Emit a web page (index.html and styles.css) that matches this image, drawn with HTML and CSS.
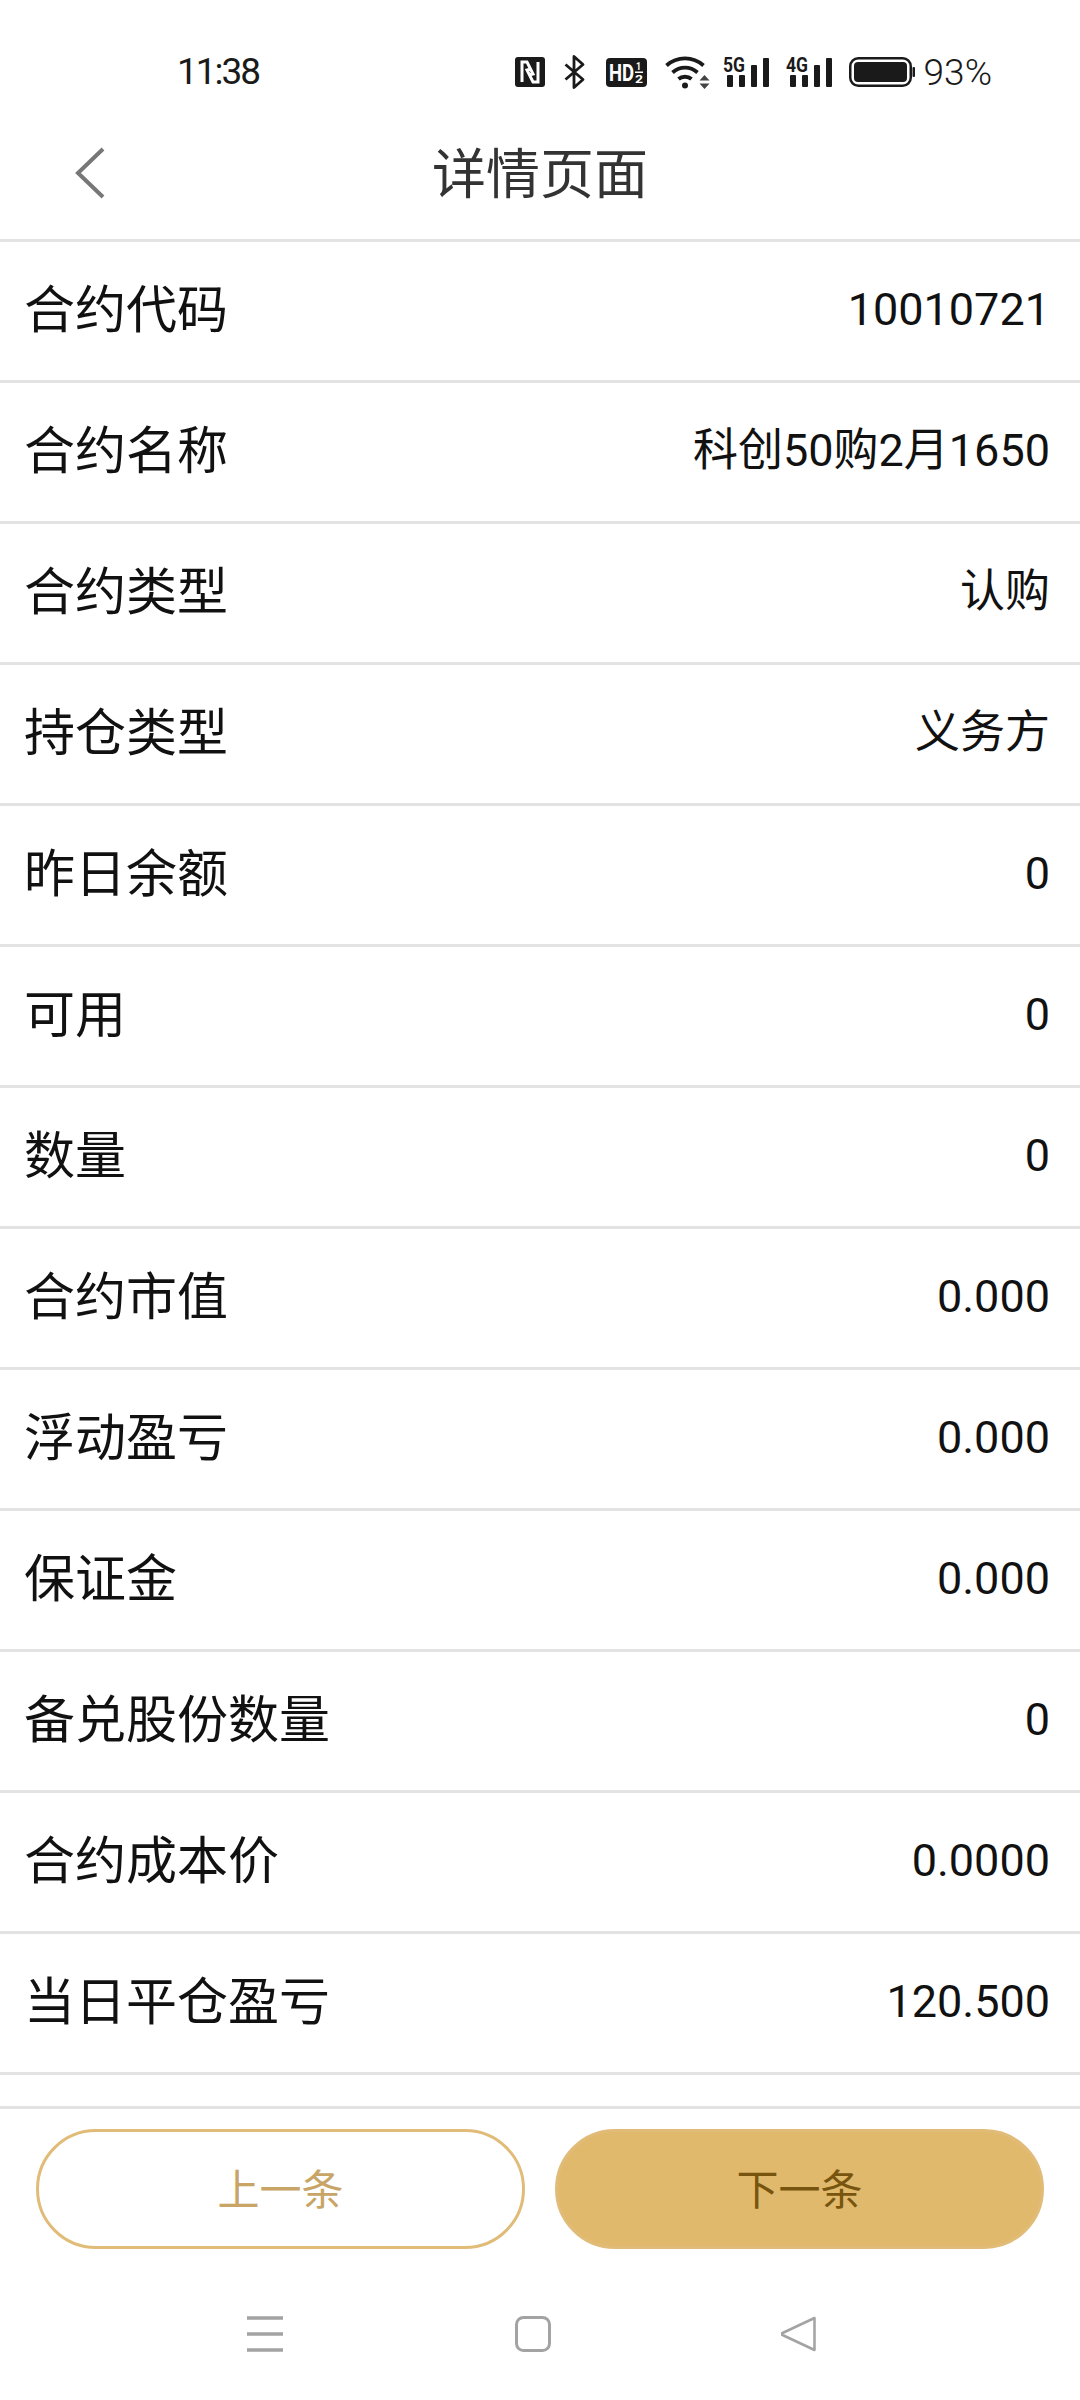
FILE: index.html
```html
<!DOCTYPE html>
<html lang="zh-CN">
<head>
<meta charset="UTF-8">
<meta name="viewport" content="width=device-width, initial-scale=1.0">
<title>详情页面</title>
<link rel="stylesheet" href="styles.css">
</head>
<body>

<div class="page">
    <div class="status-bar">
        <span class="time">11:38</span>
        <div class="status-icons">
            <!-- NFC -->
            <svg class="icon-nfc" width="30" height="30" viewBox="0 0 30 30">
                <rect width="30" height="30" rx="3" fill="#1a1a1a"/>
                <path d="M7 25V5h5l6 12-4 1M23 5v20h-5l-6-12 4-1" fill="none" stroke="#fff" stroke-width="3"/>
            </svg>
            <!-- Bluetooth -->
            <svg class="icon-bt" width="21" height="34" viewBox="0 0 21 34">
                <path d="M1.500 9.500 19 24.500 10 32.500V1.500l9 8L1.500 24.500" fill="none" stroke="#1a1a1a" stroke-width="2.800" stroke-linejoin="round"/>
            </svg>
            <!-- HD -->
            <svg class="icon-hd" width="41" height="29" viewBox="0 0 41 29">
                <rect width="41" height="29" rx="4" fill="#1a1a1a"/>
                <text x="3.800" y="23" class="hd-text" transform="scale(.77 1)">HD</text>
                <text x="30" y="12" class="hd-small" textLength="5" lengthAdjust="spacingAndGlyphs">1</text>
                <rect x="29" y="13.500" width="8" height="1.500" fill="#fff"/>
                <text x="29" y="25" class="hd-small" textLength="8" lengthAdjust="spacingAndGlyphs">2</text>
            </svg>
            <!-- Wifi -->
            <svg class="icon-wifi" width="45" height="33" viewBox="0 0 45 33">
                <path d="M1.500 9.500C12 0 28 0 38.500 9.500M7.500 16.500C15 10 25 10 32.500 16.500M13.500 23C17 20 23 20 26.500 23" fill="none" stroke="#1a1a1a" stroke-width="3.800"/>
                <circle cx="20" cy="29.500" r="3" fill="#1a1a1a"/>
                <path d="M34.500 24.500h10l-5-5.500zM34.500 27.500h10l-5 5.500z" fill="#444"/>
            </svg>
            <!-- 5G -->
            <svg class="icon-signal" width="46" height="32" viewBox="0 0 46 32">
                <text x="0" y="16" class="net-text" textLength="22" lengthAdjust="spacingAndGlyphs">5G</text>
                <rect x="4" y="19" width="6" height="12" rx="1" fill="#1a1a1a"/>
                <rect x="16" y="19" width="6" height="12" rx="1" fill="#1a1a1a"/>
                <rect x="28" y="9" width="6" height="22" rx="1" fill="#1a1a1a"/>
                <rect x="40" y="2" width="6" height="29" rx="1" fill="#1a1a1a"/>
            </svg>
            <!-- 4G -->
            <svg class="icon-signal" width="46" height="32" viewBox="0 0 46 32">
                <text x="0" y="16" class="net-text" textLength="22" lengthAdjust="spacingAndGlyphs">4G</text>
                <rect x="4" y="19" width="6" height="12" rx="1" fill="#1a1a1a"/>
                <rect x="16" y="19" width="6" height="12" rx="1" fill="#1a1a1a"/>
                <rect x="28" y="9" width="6" height="22" rx="1" fill="#1a1a1a"/>
                <rect x="40" y="2" width="6" height="29" rx="1" fill="#1a1a1a"/>
            </svg>
            <!-- Battery -->
            <svg class="icon-battery" width="66" height="30" viewBox="0 0 66 30">
                <rect x="1.250" y="1.250" width="60.500" height="27.500" rx="8" fill="none" stroke="#1a1a1a" stroke-width="2.500"/>
                <rect x="5" y="5" width="53" height="20" rx="4" fill="#1a1a1a"/>
                <rect x="63.500" y="10" width="2.500" height="10" rx="1" fill="#1a1a1a"/>
            </svg>
            <span class="battery-text">93%</span>
        </div>
    </div>

    <div class="title-bar">
        <svg class="back" width="30" height="52" viewBox="0 0 30 52">
            <path d="M28 2 3 26l25 24" fill="none" stroke="#777" stroke-width="4"/>
        </svg>
        <h1>详情页面</h1>
    </div>

    <div class="detail-list">
        <div class="row"><span class="label">合约代码</span><span class="value">10010721</span></div>
        <div class="row"><span class="label">合约名称</span><span class="value">科创50购2月1650</span></div>
        <div class="row"><span class="label">合约类型</span><span class="value">认购</span></div>
        <div class="row"><span class="label">持仓类型</span><span class="value">义务方</span></div>
        <div class="row"><span class="label">昨日余额</span><span class="value">0</span></div>
        <div class="row"><span class="label">可用</span><span class="value">0</span></div>
        <div class="row"><span class="label">数量</span><span class="value">0</span></div>
        <div class="row"><span class="label">合约市值</span><span class="value">0.000</span></div>
        <div class="row"><span class="label">浮动盈亏</span><span class="value">0.000</span></div>
        <div class="row"><span class="label">保证金</span><span class="value">0.000</span></div>
        <div class="row"><span class="label">备兑股份数量</span><span class="value">0</span></div>
        <div class="row"><span class="label">合约成本价</span><span class="value">0.0000</span></div>
        <div class="row"><span class="label">当日平仓盈亏</span><span class="value">120.500</span></div>
    </div>

    <div class="footer">
        <button class="btn btn-prev" type="button">上一条</button>
        <button class="btn btn-next" type="button">下一条</button>
    </div>

    <div class="nav-bar">
        <svg width="38" height="36" viewBox="0 0 38 36">
            <path d="M1 2h36M1 18h36M1 34h36" stroke="#a3a3a3" stroke-width="3.500"/>
        </svg>
        <svg width="36" height="36" viewBox="0 0 36 36">
            <rect x="1.500" y="1.500" width="33" height="33" rx="7" fill="none" stroke="#a3a3a3" stroke-width="3"/>
        </svg>
        <svg width="35" height="36" viewBox="0 0 35 36">
            <path d="M33.500 2 1.500 17a1 1 0 0 0 0 2l32 15z" fill="none" stroke="#a3a3a3" stroke-width="2.500" stroke-linejoin="round"/>
        </svg>
    </div>
</div>

</body>
</html>
```

FILE: styles.css
```css
* {
    box-sizing: border-box;
}
body {
    margin: 0;
    background-color: #fff;
    font-family: Roboto, "Noto Sans CJK SC", sans-serif;
}
.page {
    width: 1080px;
    height: 2400px;
    display: flex;
    flex-direction: column;
    overflow: hidden;
}

/* status bar */
.status-bar {
    height: 112px;
    padding: 50px 88px 0 177px;
    display: flex;
    justify-content: space-between;
    align-items: flex-start;
    color: #1a1a1a;
}
.time {
    font-size: 37px;
    line-height: 44px;
    letter-spacing: -2px;
}
.status-icons {
    display: flex;
    align-items: center;
    height: 44px;
}
.status-icons svg {
    overflow: visible;
}
.icon-bt {
    margin-left: 19px;
}
.icon-hd {
    margin-left: 21px;
}
.icon-wifi {
    margin-left: 18px;
}
.icon-signal {
    margin-left: 13px;
}
.icon-signal + .icon-signal {
    margin-left: 17px;
}
.icon-battery {
    margin-left: 17px;
}
.hd-text {
    font: 700 24px Roboto, sans-serif;
    fill: #fff;
}
.hd-small {
    font: 700 11px Roboto, sans-serif;
    fill: #fff;
}
.net-text {
    font: 700 21px Roboto, sans-serif;
    fill: #1a1a1a;
}
.battery-text {
    font-size: 37px;
    font-weight: 300;
    margin-left: 9px;
}

/* title */
.title-bar {
    height: 130px;
    display: flex;
    align-items: center;
    justify-content: center;
    position: relative;
    border-bottom: 3px solid #e3e3e3;
}
.title-bar h1 {
    margin: 0;
    padding-bottom: 10px;
    font-size: 54px;
    font-weight: 400;
    color: #333;
}
.back {
    position: absolute;
    left: 75px;
    top: 35px;
}

/* rows */
.detail-list {
    flex: 1;
    overflow: hidden;
}
.row {
    height: 141px;
    padding: 0 30px 0 24px;
    display: flex;
    justify-content: space-between;
    align-items: center;
    border-bottom: 3px solid #e3e3e3;
    color: #111;
}
.label {
    padding-bottom: 10px;
    font-size: 51px;
}
.value {
    padding-bottom: 3px;
    font-size: 45px;
    line-height: 60px;
}

/* buttons */
.footer {
    height: 193px;
    padding: 20px 36px 0;
    display: flex;
    align-items: flex-start;
    gap: 30px;
    border-top: 3px solid #e3e3e3;
}
.btn {
    flex: 1;
    height: 120px;
    padding: 0 0 6px;
    border-radius: 60px;
    font-family: inherit;
    font-size: 42px;
    border: 3px solid #e0bc78;
}
.btn-prev {
    background-color: #fff;
    color: #c8a566;
}
.btn-next {
    background-color: #e1b96d;
    color: #77550f;
}

/* system nav */
.nav-bar {
    height: 101px;
    padding: 17px 264px 0 246px;
    display: flex;
    justify-content: space-between;
    align-items: flex-start;
}
```
